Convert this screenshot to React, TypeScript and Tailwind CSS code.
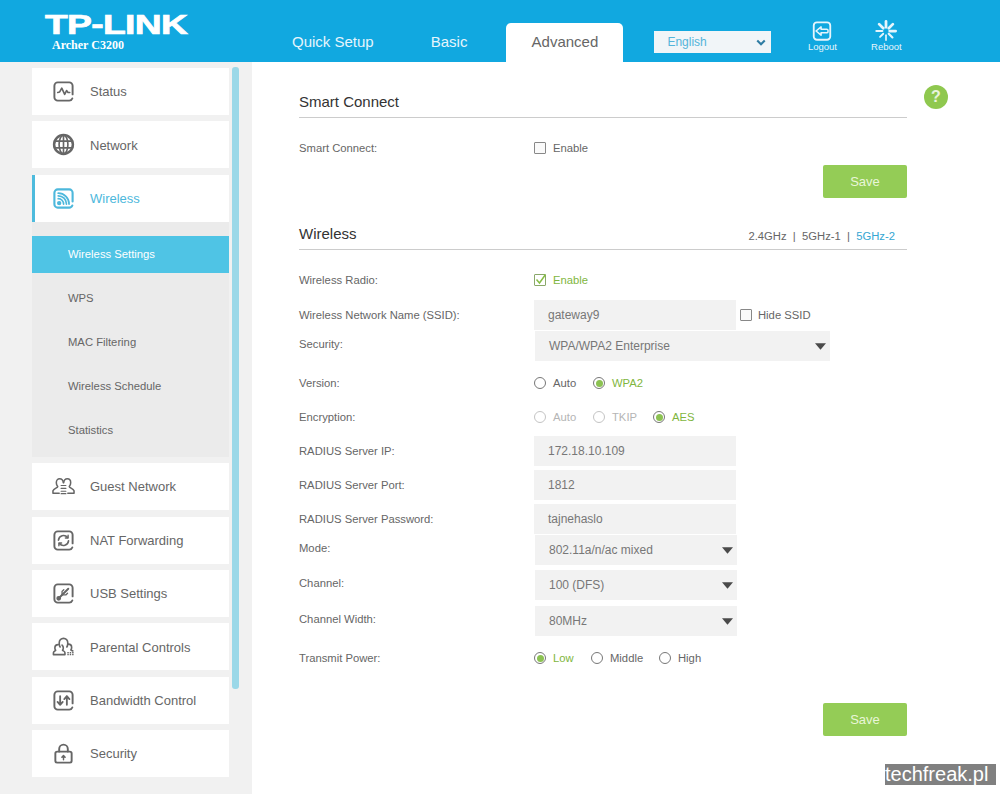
import React from 'react';

const FRAME = 'M21.5 15V6A3.5 3.5 0 0 0 18 2.5H6A3.5 3.5 0 0 0 2.5 6v12A3.5 3.5 0 0 0 6 21.5h12c1.5 0 2.7-.8 3.2-2.2';

const Icon: React.FC<{ children: React.ReactNode; className?: string }> = ({ children, className }) => (
  <svg
    viewBox="0 0 24 24"
    fill="none"
    stroke="currentColor"
    strokeWidth="2"
    strokeLinecap="round"
    strokeLinejoin="round"
    className={className ?? 'w-[23px] h-[23px] shrink-0'}
  >
    {children}
  </svg>
);

const StatusIcon = () => (
  <Icon>
    <path d={FRAME} />
    <path d="M6 13l2-.5 2.2-4 3 6.5 2-4 1.5 2H18.5" strokeWidth="1.7" />
  </Icon>
);

const GlobeIcon = () => (
  <Icon>
    <circle cx="12" cy="12" r="9.8" strokeWidth="2.6" />
    <ellipse cx="12" cy="12" rx="4.6" ry="9.8" strokeWidth="1.7" />
    <path d="M12 2v20M2.5 8.5h19M2.5 15.5h19" strokeWidth="1.7" />
  </Icon>
);

const WirelessIcon = () => (
  <Icon>
    <path d={FRAME} strokeWidth="2.2" />
    <circle cx="7.5" cy="16.8" r="1.3" fill="currentColor" />
    <path d="M6.5 12.2a5.6 5.6 0 0 1 5.6 5.6M6.5 9.2a8.6 8.6 0 0 1 8.6 8.6M6.500 6.500a11.300 11.300 0 0 1 11.300 11.300" strokeWidth="1.8" />
  </Icon>
);

const GuestIcon = () => (
  <Icon>
    <path d="M11.800 8C11.500 5.500 10 4 8 4 5.800 4 4.500 5.800 4.500 8c0 1.700.6 3 1.500 4 0 1.500-4 2-5 4.500V19h6.500" strokeWidth="1.600" />
    <path d="M12.200 8c.3-2.500 1.800-4 3.800-4 2.200 0 3.500 1.800 3.500 4 0 1.700-.6 3-1.500 4 0 1.500 4 2 5 4.500V19h-6.500" strokeWidth="1.600" />
    <path d="M9.500 11h5M9.500 14h5M9.500 17h5M9.500 19.500h5" strokeWidth="1.200" />
  </Icon>
);

const NatIcon = () => (
  <Icon>
    <path d={FRAME} />
    <path d="M6.800 11.500a5.300 5.300 0 0 1 9.300-2.800M17.200 12.500a5.300 5.300 0 0 1-9.300 2.800" strokeWidth="1.800" />
    <path d="M16.800 6.500v2.800h-2.800M7.200 17.500v-2.800H10" strokeWidth="1.500" />
  </Icon>
);

const UsbIcon = () => (
  <Icon>
    <path d={FRAME} />
    <path d="M6.500 17.500L17 7" strokeWidth="2" />
    <path d="M10.500 13.500V9.800l1.800-1.800M11 13.500h3.400l1.800-1.800" strokeWidth="1.400" />
    <circle cx="7" cy="17" r="1.500" fill="currentColor" />
  </Icon>
);

const ParentalIcon = () => (
  <Icon>
    <path d="M8.500 12.500C7.800 11.500 7.500 10 7.500 8.500c0-3 2-5 4.500-5s4.500 2 4.500 5c0 1.500-.4 3-1 4" strokeWidth="1.700" />
    <path d="M6.500 10C4.500 10 3 11.500 3 13.500c0 1 .3 1.800.8 2.500-.8.800-2.300 1-2.300 2.500v2h12v-2c0-1.500-1.500-1.700-2.500-2.500.5-.7.800-1.500.8-2.500 0-1.200-.5-2.200-1.300-2.900" strokeWidth="1.700" />
    <path d="M17 9.500c2 0 3.500 1.500 3.500 3.500 0 1-.3 1.800-.8 2.500.5.500 1.300.700 2 1.200" strokeWidth="1.700" />
    <path d="M16 18.500h6.500M16 20.500h6.500" strokeWidth="1.500" strokeDasharray="1.500 1" strokeLinecap="butt" />
  </Icon>
);

const BandwidthIcon = () => (
  <Icon>
    <path d={FRAME} />
    <path d="M8.500 7.500v9M5.800 13.500l2.700 3 2.700-3M15.500 16.500v-9M12.800 10.500l2.700-3 2.700 3" strokeWidth="1.900" />
  </Icon>
);

const LockIcon = () => (
  <Icon>
    <path d="M7.500 10V7.200a4.500 4.500 0 0 1 9 0V10" />
    <rect x="3.500" y="10" width="17" height="11.500" rx="2" />
    <path d="M12 18.500v-4M10.300 15.800L12 14l1.700 1.800" strokeWidth="1.500" />
  </Icon>
);

const LogoutIcon = () => (
  <Icon className="w-[22px] h-[22px]">
    <path d="M3 6a3.500 3.500 0 0 1 3.500-3.500h11A3.500 3.500 0 0 1 21 6v12a3.500 3.500 0 0 1-3.500 3.500h-11A3.500 3.500 0 0 1 3 18z" />
    <path d="M5.500 12L11 7.500V10h6.500c1.500 0 1.500 4 0 4H11v2.500z" strokeWidth="1.700" />
  </Icon>
);

const RebootIcon = () => (
  <Icon className="w-[22px] h-[22px]">
    <path d="M12 1.500V8" strokeWidth="3" />
    <path d="M19.500 4.500L15 9" strokeWidth="3" />
    <path d="M22.500 12H16" strokeWidth="3" />
    <path d="M19 19l-4-4" strokeWidth="2.400" />
    <path d="M12 22v-5.500" strokeWidth="1.800" />
    <path d="M5.500 18.500L9 15" strokeWidth="2" />
    <path d="M1.500 12H8" strokeWidth="2.400" />
    <path d="M4.500 4.500L9 9" strokeWidth="3" />
  </Icon>
);

const Caret = () => (
  <svg viewBox="0 0 12 7" className="w-[11px] h-[7px] shrink-0 fill-[#4a4a4a]">
    <path d="M0 0h12L6 7z" />
  </svg>
);

const NavItem: React.FC<{ label: string; icon: React.ReactNode }> = ({ label, icon }) => (
  <div className="w-[197px] h-[47px] bg-white flex items-center pl-[20px] text-[#666] text-[13px]">
    {icon}
    <span className="ml-[15px] pt-[1px]">{label}</span>
  </div>
);

const Checkbox: React.FC<{ checked?: boolean }> = ({ checked }) => (
  <span
    className={`w-[12px] h-[12px] shrink-0 border rounded-[1px] flex items-center justify-center ${
      checked ? 'border-[#8aa86a] bg-white' : 'border-[#888] bg-[#fafafa]'
    }`}
  >
    {checked && (
      <svg viewBox="0 0 12 12" className="w-[12px] h-[12px] overflow-visible" fill="none" stroke="#86bd45" strokeWidth="1.500">
        <path d="M2.500 5.500L5.500 9 11.500 .5" />
      </svg>
    )}
  </span>
);

const Radio: React.FC<{ label: string; checked?: boolean; disabled?: boolean; className?: string }> = ({
  label,
  checked,
  disabled,
  className,
}) => (
  <div
    className={`flex items-center ${className ?? ''} ${
      checked ? 'text-[#7fb640]' : disabled ? 'text-[#b5b5b5]' : 'text-[#666]'
    }`}
  >
    <span
      className={`w-[12px] h-[12px] mr-[7px] shrink-0 rounded-full border flex items-center justify-center ${
        checked ? 'border-[#777]' : disabled ? 'border-[#c4c4c4]' : 'border-[#777]'
      }`}
    >
      {checked && <span className="w-[7px] h-[7px] rounded-full bg-[#8cc252]" />}
    </span>
    {label}
  </div>
);

const Row: React.FC<{ label: string; className: string; labelClass?: string; children: React.ReactNode }> = ({
  label,
  className,
  labelClass,
  children,
}) => (
  <div className={`flex items-center ${className}`}>
    <div className={`w-[235px] shrink-0 text-[#666] ${labelClass ?? ''}`}>{label}</div>
    {children}
  </div>
);

const TextBox: React.FC<{ value: string }> = ({ value }) => (
  <div className="w-[202px] h-[30px] bg-[#f2f2f2] flex items-center pl-[14px] text-[12px] text-[#777]">{value}</div>
);

const SelectBox: React.FC<{ value: string; className?: string }> = ({ value, className }) => (
  <div
    className={`ml-[1px] h-[30px] bg-[#f2f2f2] flex items-center justify-between pl-[14px] pr-[4px] text-[12px] text-[#777] ${
      className ?? 'w-[202px]'
    }`}
  >
    {value}
    <Caret />
  </div>
);

const SaveButton: React.FC<{ className: string }> = ({ className }) => (
  <div className={`flex justify-end ${className}`}>
    <div className="w-[84px] h-[33px] rounded-[2px] bg-[#94cc56] text-[#e9f6d8] text-[13px] flex items-center justify-center">
      Save
    </div>
  </div>
);

export default function App() {
  return (
    <div className="relative w-[1000px] h-[794px] overflow-hidden bg-white font-['Liberation_Sans',Arial,sans-serif] text-[11.250px]">
      {/* top bar */}
      <header className="h-[62px] bg-[#11a8e0] flex text-white">
        <div className="w-[292px] shrink-0 pl-[45px] pt-[10px]">
          <div className="origin-left scale-x-[1.38] text-[27px] leading-[30px] font-bold tracking-[-0.5px] [-webkit-text-stroke:0.7px_white]">
            TP-LINK
          </div>
          <div className="ml-[7px] -mt-[2px] font-['Liberation_Serif',serif] font-bold text-[12px] leading-[14px]">
            Archer C3200
          </div>
        </div>
        <div className="pt-[32px] text-[15px] leading-[20px] text-[#e6f5fc]">Quick Setup</div>
        <div className="ml-[57px] pt-[32px] text-[15px] leading-[20px] text-[#e6f5fc]">Basic</div>
        <div className="ml-[39px] mt-[23px] w-[117px] h-[39px] bg-white rounded-t-[5px] text-[#666] text-[15px] flex items-center justify-center">
          Advanced
        </div>
        <div className="ml-[31px] mt-[31px] w-[117px] h-[22px] bg-[#f1f5f8] flex items-center justify-between pl-[13px] pr-[5px] text-[12px] text-[#54b4da]">
          English
          <svg viewBox="0 0 12 8" className="w-[10px] h-[7px]" fill="none" stroke="#2f7ca3" strokeWidth="2.500">
            <path d="M1.500 1.500L6 6l4.500-4.500" />
          </svg>
        </div>
        <div className="ml-[31px] w-[40px] pt-[20px] flex flex-col items-center text-[9.500px] leading-[12px] text-[#e6f5fc]">
          <LogoutIcon />
          <span className="mt-[-1px]">Logout</span>
        </div>
        <div className="ml-[24px] w-[40px] pt-[20px] flex flex-col items-center text-[9.500px] leading-[12px] text-[#e6f5fc]">
          <RebootIcon />
          <span className="mt-[-1px]">Reboot</span>
        </div>
      </header>

      <div className="flex h-[732px]">
        {/* sidebar */}
        <aside className="relative w-[252px] shrink-0 bg-[#f1f1f1] pl-[32px] pt-[6px] flex flex-col gap-[6.400px]">
          <NavItem label="Status" icon={<StatusIcon />} />
          <NavItem label="Network" icon={<GlobeIcon />} />
          <div className="w-[197px]">
            <div className="h-[47px] bg-white border-l-[3px] border-[#4dbbdd] flex items-center pl-[17px] text-[#4db8dc] text-[13px]">
              <WirelessIcon />
              <span className="ml-[15px] pt-[1px]">Wireless</span>
            </div>
            <div className="h-[235px] bg-[#ebebeb] pt-[14px] text-[#666]">
              <div className="h-[37px] bg-[#4fc4e5] text-white flex items-center pl-[36px] pt-[1px]">Wireless Settings</div>
              <div className="mt-[3px]">
                <div className="h-[44px] flex items-center pl-[36px] pt-[1px]">WPS</div>
                <div className="h-[44px] flex items-center pl-[36px] pt-[1px]">MAC Filtering</div>
                <div className="h-[44px] flex items-center pl-[36px] pt-[1px]">Wireless Schedule</div>
                <div className="h-[44px] flex items-center pl-[36px] pt-[1px]">Statistics</div>
              </div>
            </div>
          </div>
          <NavItem label="Guest Network" icon={<GuestIcon />} />
          <NavItem label="NAT Forwarding" icon={<NatIcon />} />
          <NavItem label="USB Settings" icon={<UsbIcon />} />
          <NavItem label="Parental Controls" icon={<ParentalIcon />} />
          <NavItem label="Bandwidth Control" icon={<BandwidthIcon />} />
          <NavItem label="Security" icon={<LockIcon />} />
          {/* scrollbar thumb */}
          <div className="absolute left-[232px] top-[5px] w-[7px] h-[622px] rounded-[3px] bg-[#9bd8e8]" />
        </aside>

        {/* content */}
        <main className="ml-[47px] w-[608px] shrink-0 pt-[27px]">
          <div className="h-[29px] border-b border-[#ccc] text-[15px] leading-[25px] text-[#333]">Smart Connect</div>
          <Row label="Smart Connect:" className="mt-[20px] h-[20px]">
            <Checkbox />
            <span className="ml-[7px] text-[#666]">Enable</span>
          </Row>
          <SaveButton className="mt-[7px]" />

          <div className="mt-[23px] h-[29px] border-b border-[#ccc] flex justify-between text-[#333]">
            <span className="text-[15px] leading-[25px]">Wireless</span>
            <span className="pr-[12px] pt-[8px] leading-[14px] text-[#666] whitespace-pre">
              2.4GHz  |  5GHz-1  |  <span className="text-[#35a6d3]">5GHz-2</span>
            </span>
          </div>
          <Row label="Wireless Radio:" className="mt-[20px] h-[20px]">
            <Checkbox checked />
            <span className="ml-[7px] text-[#7fb640]">Enable</span>
          </Row>
          <Row label="Wireless Network Name (SSID):" className="mt-[10px]">
            <TextBox value="gateway9" />
            <span className="ml-[4px]">
              <Checkbox />
            </span>
            <span className="ml-[6px] text-[#666]">Hide SSID</span>
          </Row>
          <Row label="Security:" className="mt-[1px]" labelClass="pb-[3px]">
            <SelectBox value="WPA/WPA2 Enterprise" className="w-[295px]" />
          </Row>
          <Row label="Version:" className="mt-[12px] h-[20px]">
            <Radio label="Auto" className="w-[59px]" />
            <Radio label="WPA2" checked />
          </Row>
          <Row label="Encryption:" className="mt-[14px] h-[20px]">
            <Radio label="Auto" disabled className="w-[59px]" />
            <Radio label="TKIP" disabled className="w-[60px]" />
            <Radio label="AES" checked />
          </Row>
          <Row label="RADIUS Server IP:" className="mt-[9px]">
            <TextBox value="172.18.10.109" />
          </Row>
          <Row label="RADIUS Server Port:" className="mt-[4px]">
            <TextBox value="1812" />
          </Row>
          <Row label="RADIUS Server Password:" className="mt-[4px]">
            <TextBox value="tajnehaslo" />
          </Row>
          <Row label="Mode:" className="mt-[1px]" labelClass="pb-[3px]">
            <SelectBox value="802.11a/n/ac mixed" />
          </Row>
          <Row label="Channel:" className="mt-[5px]" labelClass="pb-[3px]">
            <SelectBox value="100 (DFS)" />
          </Row>
          <Row label="Channel Width:" className="mt-[6px]" labelClass="pb-[3px]">
            <SelectBox value="80MHz" />
          </Row>
          <Row label="Transmit Power:" className="mt-[12px] h-[20px]">
            <Radio label="Low" checked className="w-[57px]" />
            <Radio label="Middle" className="w-[68px]" />
            <Radio label="High" />
          </Row>
          <SaveButton className="mt-[35px]" />
        </main>

        <div className="ml-[17px] mt-[23px] w-[24px] h-[24px] rounded-full bg-[#8fc84f] text-white/80 font-bold text-[16px] flex items-center justify-center">
          ?
        </div>
      </div>

      {/* watermark over the page */}
      <div className="absolute right-[4px] bottom-[9px] w-[111px] h-[21px] bg-[#808080] text-white text-[20px] leading-[21px]">
        techfreak.pl
      </div>
    </div>
  );
}
